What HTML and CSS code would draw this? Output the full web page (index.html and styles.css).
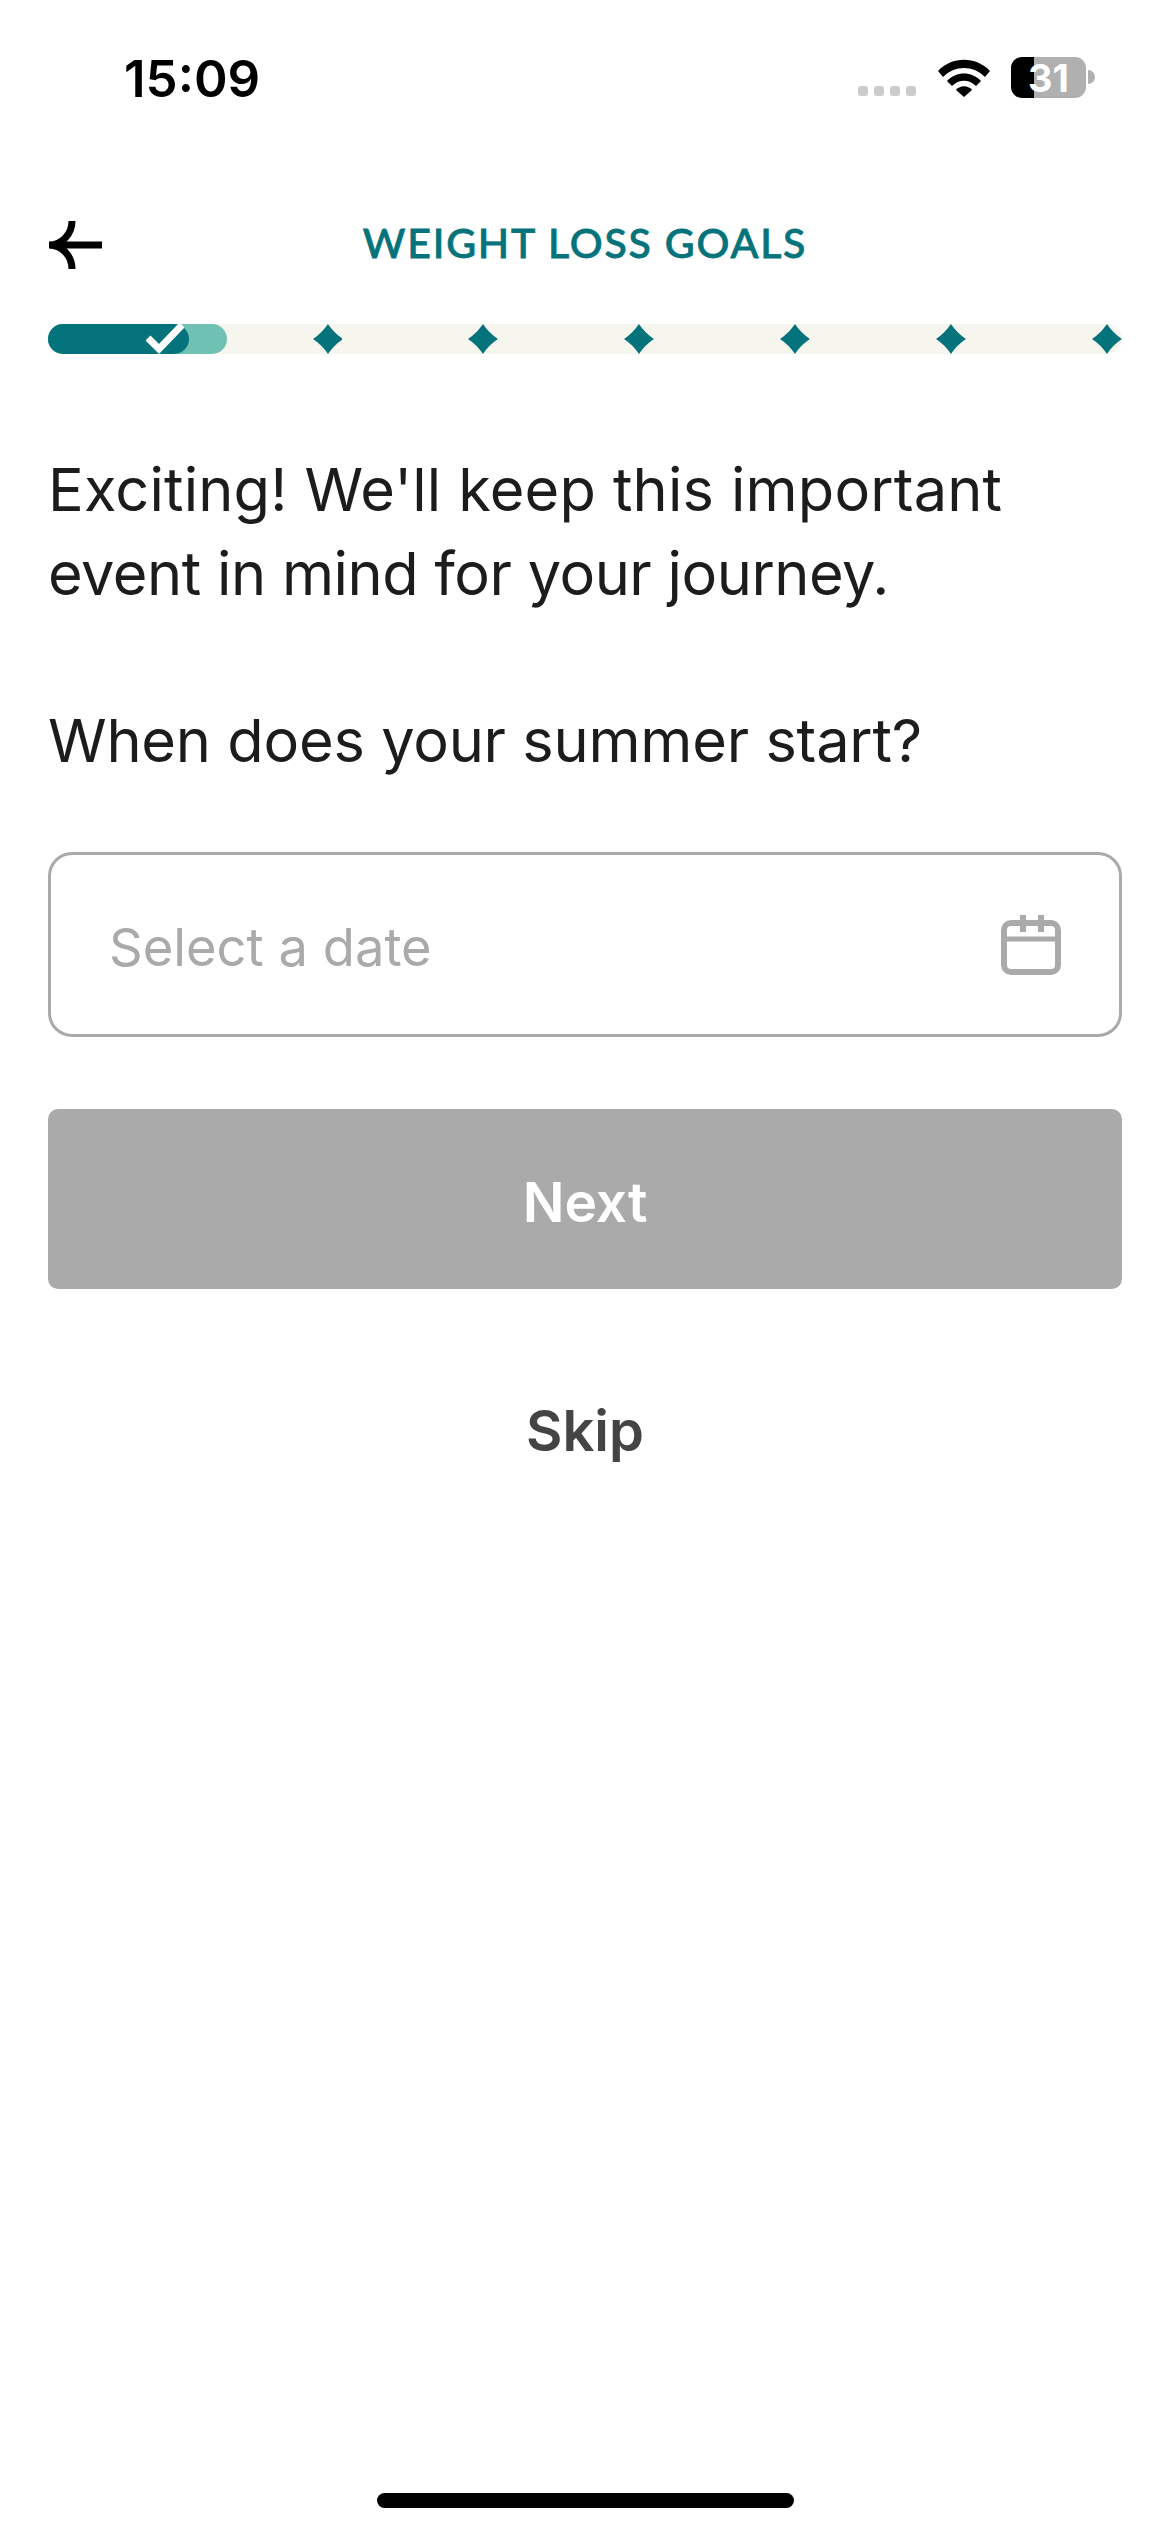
FILE: index.html
```html
<!DOCTYPE html>
<html lang="en">
<head>
  <meta charset="UTF-8" />
  <meta name="viewport" content="width=device-width, initial-scale=1.0" />
  <title>Weight Loss Goals</title>
  <link rel="stylesheet" href="styles.css">
</head>
<body>
  <div class="screen">
    <div class="status-bar">
      <span class="clock">15:09</span>
      <div class="status-icons">
        <div class="signal"><i></i><i></i><i></i><i></i></div>
        <svg class="wifi" width="52" height="38" viewBox="0 0 52 38">
          <path d="M0 12 C14 -3 38 -3 52 12 L47 18 C35 6 17 6 5 18 Z" fill="#000"/>
          <path d="M9 22 C18 12 34 12 43 22 L38 27 C31 20 21 20 14 27 Z" fill="#000"/>
          <path d="M18 31 C22 26 30 26 34 31 L26 38 Z" fill="#000"/>
        </svg>
        <div class="battery"><span>31</span></div>
        <div class="battery-nub"></div>
      </div>
    </div>

    <div class="top-nav">
      <svg class="back" width="56" height="50" viewBox="0 0 56 50">
        <path d="M54 25H1M24 1C24 14 14 25 1 25C14 25 24 36 24 49" fill="none" stroke="#000" stroke-width="7"/>
      </svg>
      <h1>WEIGHT LOSS GOALS</h1>
    </div>

    <div class="progress">
      <div class="fill-light">
        <div class="fill-dark">
          <svg width="38" height="30" viewBox="0 0 38 30">
            <path d="M2 14L13 25L36 1" fill="none" stroke="#fff" stroke-width="7"/>
          </svg>
        </div>
      </div>
      <svg class="diamond first" width="30" height="30" viewBox="0 0 30 30"><path d="M15 0Q21 9 30 15Q21 21 15 30Q9 21 0 15Q9 9 15 0Z"/></svg>
      <svg class="diamond" width="30" height="30" viewBox="0 0 30 30"><path d="M15 0Q21 9 30 15Q21 21 15 30Q9 21 0 15Q9 9 15 0Z"/></svg>
      <svg class="diamond" width="30" height="30" viewBox="0 0 30 30"><path d="M15 0Q21 9 30 15Q21 21 15 30Q9 21 0 15Q9 9 15 0Z"/></svg>
      <svg class="diamond" width="30" height="30" viewBox="0 0 30 30"><path d="M15 0Q21 9 30 15Q21 21 15 30Q9 21 0 15Q9 9 15 0Z"/></svg>
      <svg class="diamond" width="30" height="30" viewBox="0 0 30 30"><path d="M15 0Q21 9 30 15Q21 21 15 30Q9 21 0 15Q9 9 15 0Z"/></svg>
      <svg class="diamond" width="30" height="30" viewBox="0 0 30 30"><path d="M15 0Q21 9 30 15Q21 21 15 30Q9 21 0 15Q9 9 15 0Z"/></svg>
    </div>

    <div class="content">
      <p class="message">
        <span class="line-one">Exciting! We'll keep this important</span>
        <span class="line-two">event in mind for your journey.</span>
      </p>
      <p class="question">When does your summer start?</p>

      <div class="date-field">
        <span class="placeholder">Select a date</span>
        <svg width="60" height="60" viewBox="0 0 60 60">
          <rect x="3" y="8" width="54" height="49" rx="7" fill="none" stroke="#aaa" stroke-width="6"/>
          <path d="M3 24H57" stroke="#aaa" stroke-width="5"/>
          <path d="M22 0V17M40 0V17" stroke="#aaa" stroke-width="6"/>
        </svg>
      </div>

      <button class="next" type="button">Next</button>
      <button class="skip" type="button">Skip</button>
    </div>

    <div class="home-bar"></div>
  </div>
</body>
</html>
```

FILE: styles.css
```css
* {
  box-sizing: border-box;
}
html, body {
  margin: 0;
  padding: 0;
  background: #fff;
}
body {
  font-family: Inter, "Liberation Sans", sans-serif;
  color: #1c1c1c;
}
.screen {
  width: 1170px;
  height: 2532px;
  display: flex;
  flex-direction: column;
}

.status-bar {
  height: 195px;
  padding: 45px 75px 0 124px;
  display: flex;
  justify-content: space-between;
  align-items: flex-start;
}
.clock {
  margin-top: 3px;
  font-size: 51px;
  line-height: 62px;
  font-weight: 600;
  color: #000;
}
.status-icons {
  display: flex;
  align-items: flex-start;
  padding-top: 12px;
}
.signal {
  display: flex;
  gap: 6px;
  margin: 29px 22px 0 0;
}
.signal i {
  width: 10px;
  height: 10px;
  border-radius: 3px;
  background: #ccc;
}
.wifi {
  margin: 2px 21px 0 0;
}
.battery {
  width: 75px;
  height: 41px;
  border-radius: 11px;
  background: linear-gradient(90deg, #000 23px, #b0b0b0 23px);
  display: flex;
  align-items: center;
  justify-content: center;
  font-size: 38px;
  font-weight: 700;
  color: #fff;
}
.battery-nub {
  width: 7px;
  height: 14px;
  margin: 13px 0 0 2px;
  border-radius: 0 7px 7px 0;
  background: #b0b0b0;
}

.top-nav {
  height: 100px;
  padding: 0 48px;
  display: flex;
  align-items: center;
}
.top-nav h1 {
  flex: 1;
  margin: 0 0 5px -56px;
  text-align: center;
  font-family: Lato, sans-serif;
  font-size: 41px;
  font-weight: 500;
  letter-spacing: 1.8px;
  -webkit-text-stroke: 0.8px #05737b;
  color: #05737b;
}

.progress {
  margin: 29px 48px 0;
  width: 1074px;
  height: 30px;
  border-radius: 15px;
  background: #f6f5ee;
  display: flex;
  align-items: center;
}
.fill-light {
  width: 179px;
  height: 30px;
  border-radius: 15px;
  background: #6fc1b4;
}
.fill-dark {
  width: 141px;
  height: 30px;
  border-radius: 15px;
  background: #05737b;
  display: flex;
  justify-content: flex-end;
  padding-right: 5px;
}
.diamond {
  fill: #05737b;
  margin-left: 126px;
}
.diamond.first {
  margin-left: 86px;
}

.content {
  padding: 0 48px;
  flex: 1;
  display: flex;
  flex-direction: column;
}
.message, .question {
  margin: 0;
  font-size: 59.5px;
  line-height: 84px;
  white-space: nowrap;
}
.message {
  margin-top: 93px;
}
.line-one, .line-two {
  display: block;
}
.line-one {
  letter-spacing: 0.17px;
}
.line-two {
  letter-spacing: -0.47px;
}
.question {
  margin-top: 83px;
  letter-spacing: -0.22px;
}

.date-field {
  margin-top: 70px;
  height: 185px;
  border: 3px solid #aaa;
  border-radius: 24px;
  padding: 0 58px 0 58px;
  display: flex;
  align-items: center;
  justify-content: space-between;
  font-size: 52.5px;
  color: #aaa;
}
.placeholder {
  padding-top: 4px;
}

.next {
  margin-top: 72px;
  height: 180px;
  padding: 6px 0 0;
  border: none;
  border-radius: 10px;
  background: #aaa;
  color: #fff;
  font: 600 55px Inter, sans-serif;
}
.skip {
  margin-top: 108px;
  padding: 0;
  border: none;
  background: none;
  color: #444;
  font: 600 56px Inter, sans-serif;
}

.home-bar {
  width: 417px;
  height: 15px;
  margin: 0 auto 24px;
  border-radius: 8px;
  background: #000;
}
```
